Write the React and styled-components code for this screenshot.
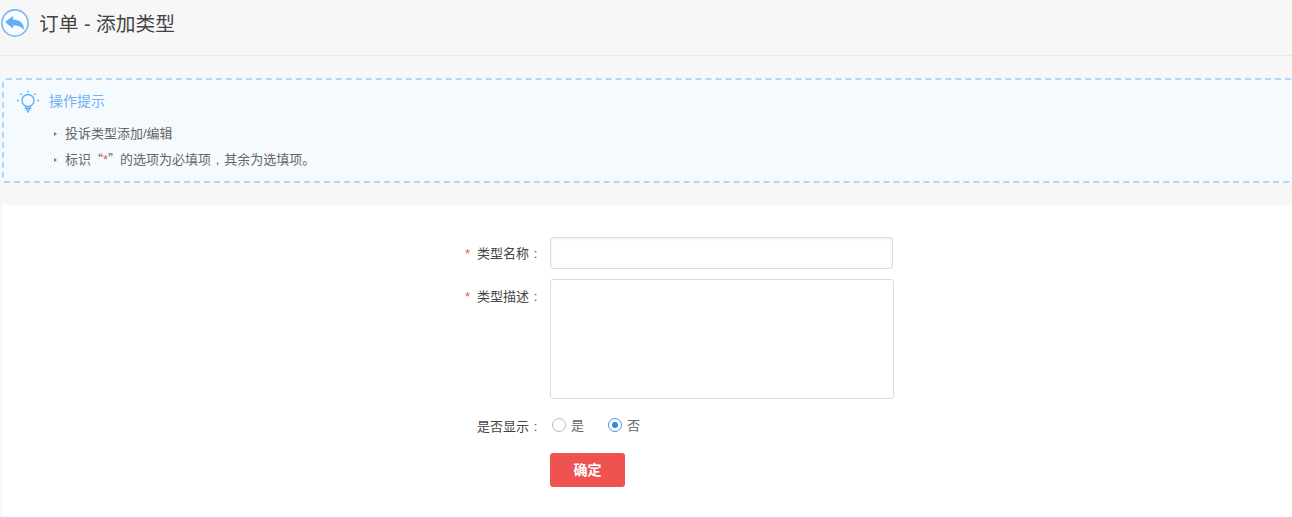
import React from "react";
import styled, { createGlobalStyle } from "styled-components";

const GlobalStyle = createGlobalStyle`
    html, body {
        margin: 0;
        height: 100%;
        overflow: hidden;
        background: #f7f7f7;
    }
    * {
        box-sizing: border-box;
    }
`;

const Page = styled.div`
    width: 100%;
    height: 517px;
    overflow: hidden;
    font-family: "Liberation Sans", "Noto Sans CJK SC", sans-serif;
    color: #555;
    background: #f7f7f7;
`;

const Header = styled.header`
    height: 56px;
    padding: 9px 0 0 1px;
    display: flex;
    align-items: flex-start;
    gap: 10px;
    border-bottom: 1px solid #e9e9e9;
`;

const BackButton = styled.a`
    display: block;
    width: 28px;
    height: 28px;
    flex: none;
`;

const Title = styled.h1`
    margin: 0;
    font-size: 19.75px;
    font-weight: 400;
    line-height: 30px;
    color: #444;
`;

const TipBox = styled.section`
    height: 105px;
    margin: 22px -6px 0 2px;
    padding: 10px 13px;
    background: #f5faff;
    border: 2px dashed #add8fc;
    border-radius: 4px;
`;

const TipHead = styled.div`
    display: flex;
    align-items: center;
    gap: 10px;
    height: 23px;
`;

const TipTitle = styled.span`
    margin-bottom: 4px;
    font-size: 14px;
    color: #6fb3f2;
`;

const TipList = styled.ul`
    list-style: none;
    margin: 8px 0 0;
    padding: 0 0 0 35px;
`;

const TipItem = styled.li`
    position: relative;
    height: 26px;
    padding-left: 13px;
    font-size: 13px;
    line-height: 26px;
    color: #666;

    &::before {
        content: "";
        position: absolute;
        left: 2px;
        top: 11px;
        border-left: 3px solid #777;
        border-top: 2px solid transparent;
        border-bottom: 2px solid transparent;
    }
`;

const Quote = styled.span`
    font-family: "Noto Sans CJK SC", sans-serif;
    font-size: 12px;
    line-height: 1;
`;

const Mark = styled.span`
    color: #ef5350;
`;

// full-width cell with the mark centred, as the reference draws its , and :
const Punct = styled.span`
    display: inline-block;
    width: 1em;
    text-align: center;
`;

const Panel = styled.main`
    height: 312px;
    margin: 22px 0 0 2px;
    padding-top: 32px;
    background: #fff;
`;

const Form = styled.form`
    display: grid;
    grid-template-columns: 540px 344px;
    column-gap: 8px;
    align-items: start;
`;

const Label = styled.label`
    display: block;
    height: ${({ $tall }) => ($tall ? "130px" : "42px")};
    padding-top: ${({ $top }) => $top}px;
    font-size: 13px;
    line-height: 20px;
    color: #444;
    text-align: right;
`;

const Star = styled.span`
    margin-right: 7px;
    color: #ef5350;
`;

const TextInput = styled.input`
    display: block;
    width: 343px;
    height: 32px;
    border: 1px solid #dcdcdc;
    border-radius: 3px;
    background: #fff;
    box-shadow: inset 0 1px 3px rgba(0, 0, 0, 0.08);
    outline: none;
`;

const TextArea = styled.textarea`
    display: block;
    width: 344px;
    height: 120px;
    border: 1px solid #dcdcdc;
    border-radius: 3px;
    background: #fff;
    resize: none;
    outline: none;
`;

const RadioRow = styled.div`
    display: flex;
    align-items: center;
    gap: 24px;
    height: 34px;
    padding: 0 0 4px 2px;
`;

const RadioOption = styled.span`
    display: flex;
    align-items: center;
    gap: 5px;
    font-size: 13px;
    color: #666;
`;

const RadioDot = styled.i`
    display: flex;
    align-items: center;
    justify-content: center;
    width: 14px;
    height: 14px;
    margin-top: 1px;
    border-radius: 50%;
    border: 1px solid ${({ $on }) => ($on ? "#3f96ea" : "#bbb")};
    background: #fff;

    &::after {
        content: "";
        display: ${({ $on }) => ($on ? "block" : "none")};
        width: 6px;
        height: 6px;
        border-radius: 50%;
        background: #2f8ae5;
    }
`;

const Submit = styled.button`
    width: 75px;
    height: 34px;
    margin-top: 2px;
    padding: 0 0 2px;
    border: 0;
    border-radius: 3px;
    background: #ef5350;
    color: #fff;
    font-family: inherit;
    font-size: 14px;
    font-weight: 700;
`;

const BackIcon = () => (
    <svg width="28" height="28" viewBox="0 0 28 28">
        <circle cx="14" cy="14" r="13.1" fill="#fafdff" stroke="#74b8f5" strokeWidth="1.6" />
        <path d="M4 13 L12 7 V10.6 C18.5 10.7 22.8 14 23.2 21 C20.6 17.6 17 16.4 12 16.5 V19.5 Z" fill="#64aef3" />
    </svg>
);

const BulbIcon = () => (
    <svg width="22" height="23" viewBox="0 0 22 23" fill="none" stroke="#5fb0f5" strokeWidth="1.4">
        <circle cx="11" cy="10.5" r="6" />
        <path d="M8.5 16.5 V18.2 H13.5 V16.5 M9 20 H13 M10 21.8 H12" />
        <path d="M0 10.5 H2 M20 10.5 H22 M3.5 3.5 L4.8 4.8 M18.5 3.5 L17.2 4.8 M11 0.5 V2.5" />
    </svg>
);

const App = () => {
    return (
        <Page>
            <GlobalStyle />
            <Header>
                <BackButton>
                    <BackIcon />
                </BackButton>
                <Title>订单 - 添加类型</Title>
            </Header>
            <TipBox>
                <TipHead>
                    <BulbIcon />
                    <TipTitle>操作提示</TipTitle>
                </TipHead>
                <TipList>
                    <TipItem>投诉类型添加/编辑</TipItem>
                    <TipItem>
                        标识<Quote>“</Quote><Mark>*</Mark><Quote>”</Quote>的选项为必填项<Punct>,</Punct>其余为选填项。
                    </TipItem>
                </TipList>
            </TipBox>
            <Panel>
                <Form>
                    <Label $top={7}>
                        <Star>*</Star>类型名称<Punct>:</Punct>
                    </Label>
                    <div>
                        <TextInput type="text" />
                    </div>
                    <Label $top={8} $tall>
                        <Star>*</Star>类型描述<Punct>:</Punct>
                    </Label>
                    <div>
                        <TextArea />
                    </div>
                    <Label $top={8}>
                        是否显示<Punct>:</Punct>
                    </Label>
                    <RadioRow>
                        <RadioOption>
                            <RadioDot />是
                        </RadioOption>
                        <RadioOption>
                            <RadioDot $on />否
                        </RadioOption>
                    </RadioRow>
                    <span />
                    <div>
                        <Submit type="button">确定</Submit>
                    </div>
                </Form>
            </Panel>
        </Page>
    );
};

export default App;
